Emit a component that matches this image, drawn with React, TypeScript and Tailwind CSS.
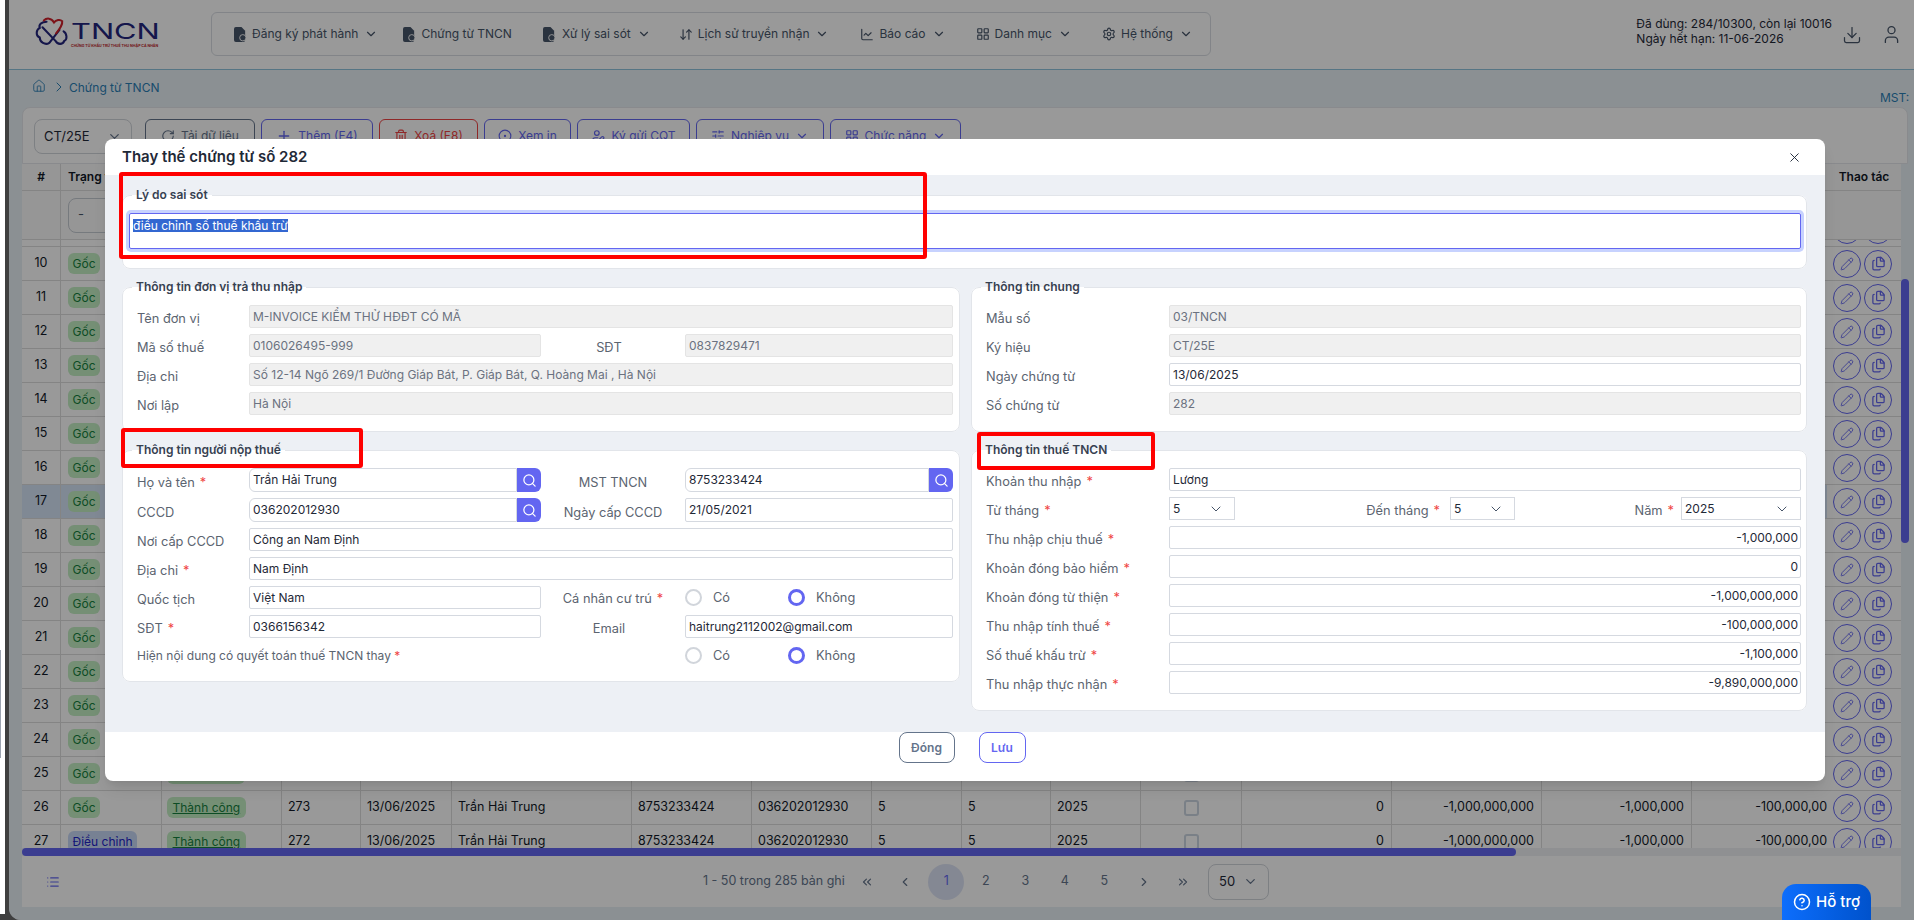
import {
  ChartLine,
  ChevronDown,
  ChevronLeft,
  ChevronRight,
  ChevronsLeft,
  ChevronsRight,
  CircleDot,
  CircleHelp,
  Download,
  Files,
  House,
  LayoutGrid,
  List,
  ArrowDownUp,
  Pencil,
  Plus,
  RotateCw,
  Search,
  Settings,
  SlidersHorizontal,
  Trash2,
  User,
  UserPen,
  X,
} from "lucide-react";
import type { ReactNode } from "react";

const cols =
  "grid grid-cols-[39px_101px_120px_79px_91px_180px_120px_120px_90px_89px_90px_101px_150px_150px_150px_135px_74px]";

function DocIcon() {
  return (
    <svg viewBox="0 0 14 16" className="h-[15px] w-[13px] shrink-0" fill="#475569">
      <path d="M2 0h6l4 4v10a2 2 0 0 1-2 2H2a2 2 0 0 1-2-2V2a2 2 0 0 1 2-2z" />
      <circle cx="9.5" cy="11.5" r="3.4" stroke="#fff" strokeWidth="1" />
    </svg>
  );
}

function NavItem({
  icon,
  label,
  caret = true,
  className = "",
}: {
  icon: ReactNode;
  label: string;
  caret?: boolean;
  className?: string;
}) {
  return (
    <div className={`flex items-center whitespace-nowrap text-[12px] text-[#475569] ${className}`}>
      <span className="mr-[5px] flex w-[14px] justify-center">{icon}</span>
      {label}
      {caret && <ChevronDown className="ml-[6px] h-[14px] w-[14px]" />}
    </div>
  );
}

function Logo() {
  return (
    <div className="flex w-[176px] shrink-0 items-center gap-[2px]">
      <svg viewBox="28 20 100 95" className="-mt-[5px] h-[33px] w-[34px] shrink-0" fill="none" strokeWidth="6" strokeLinecap="round">
        <path stroke="#23257d" d="M62 36C48 36 38 44 42 54C30 60 30 78 42 82C42 96 58 106 70 98L100 60" />
        <path stroke="#23257d" d="M50 52L88 92C94 104 110 104 114 92C124 88 122 70 112 64" />
        <path stroke="#d0202a" d="M54 32C62 24 76 24 84 38C90 30 102 28 108 34C110 46 100 58 90 70" />
      </svg>
      <div className="flex w-[88px] flex-col">
        <span className="origin-left scale-x-[1.4] text-[22px] leading-[22px] font-normal text-[#23257d]">TNCN</span>
        <span className="mt-[2px] whitespace-nowrap text-[3.6px] leading-[5px] font-bold text-[#c0272d]">
          CHỨNG TỪ KHẤU TRỪ THUẾ THU NHẬP CÁ NHÂN
        </span>
      </div>
    </div>
  );
}

function Header() {
  return (
    <header className="flex h-[70px] shrink-0 items-center border-b border-[#8fc3dc] bg-white pl-[26px]">
      <Logo />
      <nav className="-mt-px flex h-[44px] w-[1000px] items-center gap-[27px] rounded-md border border-[#d9dde3] bg-white px-[21px]">
        <NavItem icon={<DocIcon />} label="Đăng ký phát hành" />
        <NavItem icon={<DocIcon />} label="Chứng từ TNCN" caret={false} className="-ml-[3px]" />
        <NavItem icon={<DocIcon />} label="Xử lý sai sót" className="ml-[4px]" />
        <NavItem icon={<ArrowDownUp className="h-[15px] w-[15px]" />} label="Lịch sử truyền nhận" className="ml-px" />
        <NavItem icon={<ChartLine className="h-[15px] w-[15px]" />} label="Báo cáo" className="ml-[4px]" />
        <NavItem icon={<LayoutGrid className="h-[14px] w-[14px]" />} label="Danh mục" className="ml-[3px]" />
        <NavItem icon={<Settings className="h-[14px] w-[14px]" />} label="Hệ thống" className="ml-[3px]" />
      </nav>
      <div className="ml-auto flex items-center pr-[12px]">
        <div className="-mt-[7px] text-[12px] leading-[15px] text-[#1f2937]">
          <div>Đã dùng: 284/10300, còn lại 10016</div>
          <div>Ngày hết hạn: 11-06-2026</div>
        </div>
        <Download className="ml-[10px] h-[20px] w-[20px] text-[#475569]" strokeWidth={1.5} />
        <User className="ml-[19px] h-[21px] w-[21px] text-[#475569]" strokeWidth={1.5} />
      </div>
    </header>
  );
}

function ToolButton({
  icon,
  label,
  width,
  tone = "indigo",
  caret = false,
}: {
  icon: ReactNode;
  label: string;
  width: string;
  tone?: "indigo" | "slate" | "red";
  caret?: boolean;
}) {
  const toneClass =
    tone === "red"
      ? "border-[#ef4444] text-[#ef4444]"
      : tone === "slate"
        ? "border-[#64748b] text-[#64748b]"
        : "border-[#6366f1] text-[#6366f1]";
  return (
    <div className={`flex h-[34px] items-center justify-center gap-[6px] rounded-md border text-[12px] whitespace-nowrap ${width} ${toneClass}`}>
      {icon}
      {label}
      {caret && <ChevronDown className="h-[14px] w-[14px]" />}
    </div>
  );
}

function Toolbar() {
  return (
    <div className="flex h-[57px] shrink-0 items-start gap-[6px] rounded-t-lg border border-[#e5e7eb] bg-white pt-[11px] pl-[11px]">
      <div className="mr-[7px] flex h-[35px] w-[98px] items-center justify-between rounded-lg border border-[#d1d5db] px-[9px] text-[13px] text-[#1f2937]">
        CT/25E
        <ChevronDown className="h-[15px] w-[15px] text-[#64748b]" />
      </div>
      <ToolButton tone="slate" width="w-[110px]" icon={<RotateCw className="h-[14px] w-[14px]" />} label="Tải dữ liệu" />
      <ToolButton width="w-[112px]" icon={<Plus className="h-[16px] w-[16px]" />} label="Thêm (F4)" />
      <ToolButton tone="red" width="w-[99px]" icon={<Trash2 className="h-[14px] w-[14px]" />} label="Xoá (F8)" />
      <ToolButton width="w-[87px]" icon={<CircleDot className="h-[14px] w-[14px]" />} label="Xem in" />
      <ToolButton width="w-[113px]" icon={<UserPen className="h-[14px] w-[14px]" />} label="Ký gửi CQT" />
      <ToolButton width="w-[128px]" caret icon={<SlidersHorizontal className="h-[14px] w-[14px]" />} label="Nghiệp vụ" />
      <ToolButton width="w-[131px]" caret icon={<LayoutGrid className="h-[14px] w-[14px]" />} label="Chức năng" />
    </div>
  );
}

function Row({ no, selected }: { no: number; selected?: boolean }) {
  const adjusted = no === 27;
  // rows under the dialog only need what shows around it
  const full = no >= 26;
  const cell = "flex items-center border-r border-[#dcdcdc] overflow-hidden whitespace-nowrap";
  const money = "flex items-center justify-end border-r border-[#dcdcdc] pr-[7px] whitespace-nowrap";
  return (
    <div className={`${cols} h-[34px] border-b border-[#dcdcdc] text-[12.5px] text-[#111827] ${selected ? "bg-[#d6e4f7]" : "bg-white"}`}>
      <div className={`${cell} justify-center`}>{no > 9 && no}</div>
      <div className={`${cell} pl-[7px]`}>
        {no > 9 && (
          <span className={`flex h-[21px] items-center rounded-[6px] px-[4.5px] text-[12px] ${adjusted ? "bg-[#c7d7f5] text-[#1d23c9]" : "bg-[#c4eec4] text-[#15803d]"}`}>
            {adjusted ? "Điều chỉnh" : "Gốc"}
          </span>
        )}
      </div>
      <div className={`${cell} pl-[5px]`}>
        {full && (
          <span className="flex h-[21px] items-center rounded-[6px] bg-[#c4eec4] px-[5.5px] text-[12px] text-[#15803d] underline">Thành công</span>
        )}
        {no === 25 && <span className="h-[21px] w-[78px] rounded-[6px] bg-[#c4eec4]" />}
      </div>
      <div className={`${cell} pl-[6px]`}>{full && 299 - no}</div>
      <div className={`${cell} pl-[6px]`}>{full && "13/06/2025"}</div>
      <div className={`${cell} pl-[6px]`}>{full && "Trần Hải Trung"}</div>
      <div className={`${cell} pl-[6px]`}>{full && "8753233424"}</div>
      <div className={`${cell} pl-[6px]`}>{full && "036202012930"}</div>
      <div className={`${cell} pl-[6px]`}>{full && "5"}</div>
      <div className={`${cell} pl-[6px]`}>{full && "5"}</div>
      <div className={`${cell} pl-[6px]`}>{full && "2025"}</div>
      <div className={`${cell} justify-center`}>
        <span className="h-[16px] w-[15px] rounded-[3px] border-2 border-[#cbd5e1] bg-white" />
      </div>
      <div className={money}>{full && "0"}</div>
      <div className={money}>{full && "-1,000,000,000"}</div>
      <div className={money}>{full && "-1,000,000"}</div>
      <div className="flex items-center overflow-hidden whitespace-nowrap">
        {full && <span className="w-[143px] shrink-0 text-right">-100,000,000</span>}
      </div>
      <div className="flex items-center gap-[3px] bg-white pl-[6px] text-[#6366f1]">
        <span className="flex h-[28px] w-[28px] items-center justify-center rounded-full border border-[#6366f1]">
          <Pencil className="h-[14px] w-[14px]" strokeWidth={1.5} />
        </span>
        <span className="flex h-[28px] w-[28px] items-center justify-center rounded-full border border-[#6366f1]">
          <Files className="h-[15px] w-[15px]" strokeWidth={2} />
        </span>
      </div>
    </div>
  );
}

function DataTable() {
  const rows = Array.from({ length: 19 }, (_, i) => i + 9);
  return (
    <div className="flex shrink-0">
      <div className="w-[1879px] shrink-0">
        <div className={`${cols} h-[27px] border-b border-[#dcdcdc] bg-[#fafafa] text-[12px] font-semibold text-[#111827]`}>
          <div className="flex items-center justify-center border-r border-[#dcdcdc]">#</div>
          <div className="flex items-center pl-[7px]">Trạng thái</div>
          <div className="col-start-17 flex items-center justify-center">Thao tác</div>
        </div>
        <div className={`${cols} h-[49px] border-b border-[#dcdcdc] bg-[#fafafa]`}>
          <div className="border-r border-[#dcdcdc]" />
          <div className="flex items-center pl-[7px]">
            <span className="flex h-[35px] w-[84px] items-center rounded-lg border border-[#c5cbd3] pl-[9px] text-[13px] text-[#475569]">-</span>
          </div>
        </div>
        <div className="h-[608px] overflow-hidden">
          <div className="-mt-[27px]">
            {rows.map((no) => (
              <Row key={no} no={no} selected={no === 17} />
            ))}
          </div>
        </div>
        <div className="h-[8px] bg-[#eef1f4]">
          <div className="h-[8px] w-[1494px] rounded-full bg-[#6366f1]" />
        </div>
      </div>
      <div className="w-[8px] shrink-0">
        <div className="mt-[115px] h-[264px] rounded-full bg-[#6366f1]" />
      </div>
    </div>
  );
}

function Pagination() {
  const pages = ["2", "3", "4", "5"];
  const btn = "flex h-[36px] w-[39.5px] items-center justify-center";
  return (
    <div className="flex h-[51px] w-[1879px] shrink-0 items-center bg-white pl-[24px] text-[12.5px] text-[#64748b]">
      <List className="h-[14px] w-[14px] text-[#6366f1]" />
      <span className="ml-[643px] w-[139px] whitespace-nowrap">1 - 50 trong 285 bản ghi</span>
      <span className={`${btn} ml-[5px]`}><ChevronsLeft className="h-[14px] w-[14px]" /></span>
      <span className={`${btn} -ml-px`}><ChevronLeft className="h-[14px] w-[14px]" /></span>
      <span className={`${btn} ml-[1.5px]`}>
        <span className="flex h-[36px] w-[36px] items-center justify-center rounded-full bg-[#dde3f5] text-[#6366f1]">1</span>
      </span>
      {pages.map((p) => (
        <span key={p} className={btn}>{p}</span>
      ))}
      <span className={btn}><ChevronRight className="h-[14px] w-[14px]" /></span>
      <span className={btn}><ChevronsRight className="h-[14px] w-[14px]" /></span>
      <span className="ml-[5px] flex h-[36px] w-[61px] items-center justify-between rounded-lg border border-[#d1d5db] px-[10px] text-[13px] text-[#1f2937]">
        50
        <ChevronDown className="h-[15px] w-[15px] text-[#64748b]" />
      </span>
    </div>
  );
}

function Label({ children, req, className = "" }: { children: ReactNode; req?: boolean; className?: string }) {
  return (
    <span className={`shrink-0 pt-[5px] text-[12.8px] whitespace-nowrap text-[#5b6470] ${className}`}>
      {children}
      {req && <span className="ml-[5px] text-[#ef4444]">*</span>}
    </span>
  );
}

function Field({ value, disabled, right, className = "flex-1" }: { value: string; disabled?: boolean; right?: boolean; className?: string }) {
  return (
    <div
      className={`flex h-full min-w-0 items-center rounded-[2px] border px-[3px] text-[12px] whitespace-nowrap ${className} ${
        disabled ? "border-[#e4e4e4] bg-[#f0f0f0] text-[#6b7280]" : "border-[#d5d9e0] bg-white text-[#1f2937]"
      } ${right ? "justify-end pr-[2px]" : ""}`}
    >
      {value}
    </div>
  );
}

function SearchField({ value, className }: { value: string; className: string }) {
  return (
    <div className={`flex h-full ${className}`}>
      <div className="flex min-w-0 flex-1 items-center rounded-l-[6px] border border-[#d5d9e0] px-[3px] text-[12px] text-[#1f2937]">{value}</div>
      <div className="flex w-[24px] items-center justify-center rounded-r-[6px] bg-[#6366f1]">
        <Search className="h-[15px] w-[15px] text-white" strokeWidth={2} />
      </div>
    </div>
  );
}

function SelectBox({ value, className }: { value: string; className: string }) {
  return (
    <div className={`flex h-full items-center justify-between border border-[#d5d9e0] pr-[10px] pl-[3px] text-[12px] text-[#1f2937] ${className}`}>
      {value}
      <ChevronDown className="h-[16px] w-[16px] text-[#475569]" strokeWidth={1.5} />
    </div>
  );
}

function Radios() {
  return (
    <div className="flex items-center text-[12.8px] text-[#5b6470]">
      <span className="h-[17px] w-[17px] rounded-full border-2 border-[#d1d5db]" />
      <span className="ml-[11px] w-[75px]">Có</span>
      <span className="h-[17px] w-[17px] rounded-full border-[3px] border-[#6366f1]" />
      <span className="ml-[11px]">Không</span>
    </div>
  );
}

function Card({ title, className = "", children }: { title: string; className?: string; children: ReactNode }) {
  return (
    <fieldset className="rounded-lg border border-[#e2e5ea] bg-white">
      <legend className="ml-[9px] px-[4px] text-[12px] leading-[15px] font-semibold text-[#374151]">
        <span className="relative -top-px">{title}</span>
      </legend>
      <div className={`pt-[10px] ${className}`}>{children}</div>
    </fieldset>
  );
}

function InfoRow({ h = "h-[23px]", children }: { h?: string; children: ReactNode }) {
  return <div className={`flex items-center ${h}`}>{children}</div>;
}

function PayerCards() {
  return (
    <div className="flex flex-col gap-[11px]">
      <Card title="Thông tin đơn vị trả thu nhập" className="pr-[6px] pb-[16px] pl-[14px]">
        <div className="flex flex-col gap-[6px]">
          <InfoRow><Label className="w-[112px]">Tên đơn vị</Label><Field disabled value="M-INVOICE KIỂM THỬ HĐĐT CÓ MÃ" /></InfoRow>
          <InfoRow>
            <Label className="w-[112px]">Mã số thuế</Label>
            <Field disabled value="0106026495-999" className="w-[292px]" />
            <Label className="w-[144px] pr-[8px] text-center">SĐT</Label>
            <Field disabled value="0837829471" />
          </InfoRow>
          <InfoRow><Label className="w-[112px]">Địa chỉ</Label><Field disabled value="Số 12-14 Ngõ 269/1 Đường Giáp Bát, P. Giáp Bát, Q. Hoàng Mai , Hà Nội" /></InfoRow>
          <InfoRow><Label className="w-[112px]">Nơi lập</Label><Field disabled value="Hà Nội" /></InfoRow>
        </div>
      </Card>
      <Card title="Thông tin người nộp thuế" className="pr-[6px] pb-[14px] pl-[14px]">
        <div className="flex flex-col gap-[6px]">
          <InfoRow h="h-[24px]">
            <Label req className="w-[112px]">Họ và tên</Label>
            <SearchField value="Trần Hải Trung" className="w-[292px]" />
            <Label className="w-[144px] text-center">MST TNCN</Label>
            <SearchField value="8753233424" className="flex-1" />
          </InfoRow>
          <InfoRow h="h-[24px]">
            <Label className="w-[112px]">CCCD</Label>
            <SearchField value="036202012930" className="w-[292px]" />
            <Label className="w-[144px] text-center">Ngày cấp CCCD</Label>
            <Field value="21/05/2021" />
          </InfoRow>
          <InfoRow><Label className="w-[112px]">Nơi cấp CCCD</Label><Field value="Công an Nam Định" /></InfoRow>
          <InfoRow><Label req className="w-[112px]">Địa chỉ</Label><Field value="Nam Định" /></InfoRow>
          <InfoRow>
            <Label className="w-[112px]">Quốc tịch</Label>
            <Field value="Việt Nam" className="w-[292px]" />
            <Label req className="w-[144px] pt-0 pb-[2px] text-center">Cá nhân cư trú</Label>
            <Radios />
          </InfoRow>
          <InfoRow>
            <Label req className="w-[112px]">SĐT</Label>
            <Field value="0366156342" className="w-[292px]" />
            <Label className="w-[144px] pr-[8px] text-center">Email</Label>
            <Field value="haitrung2112002@gmail.com" />
          </InfoRow>
          <InfoRow>
            <span className="w-[548px] shrink-0 text-[12px] text-[#5b6470]">
              Hiện nội dung có quyết toán thuế TNCN thay <span className="text-[#ef4444]">*</span>
            </span>
            <Radios />
          </InfoRow>
        </div>
      </Card>
    </div>
  );
}

function TaxCards() {
  const money: [string, string][] = [
    ["Thu nhập chịu thuế", "-1,000,000"],
    ["Khoản đóng bảo hiểm", "0"],
    ["Khoản đóng từ thiện", "-1,000,000,000"],
    ["Thu nhập tính thuế", "-100,000,000"],
    ["Số thuế khấu trừ", "-1,100,000"],
    ["Thu nhập thực nhận", "-9,890,000,000"],
  ];
  return (
    <div className="flex flex-col gap-[11px]">
      <Card title="Thông tin chung" className="pr-[5px] pb-[16px] pl-[14px]">
        <div className="flex flex-col gap-[6px]">
          <InfoRow><Label className="w-[183px]">Mẫu số</Label><Field disabled value="03/TNCN" /></InfoRow>
          <InfoRow><Label className="w-[183px]">Ký hiệu</Label><Field disabled value="CT/25E" /></InfoRow>
          <InfoRow><Label className="w-[183px]">Ngày chứng từ</Label><Field value="13/06/2025" /></InfoRow>
          <InfoRow><Label className="w-[183px]">Số chứng từ</Label><Field disabled value="282" /></InfoRow>
        </div>
      </Card>
      <Card title="Thông tin thuế TNCN" className="pr-[5px] pb-[16px] pl-[14px]">
        <div className="flex flex-col gap-[6px]">
          <InfoRow><Label req className="w-[183px]">Khoản thu nhập</Label><Field value="Lương" /></InfoRow>
          <InfoRow>
            <Label req className="w-[183px]">Từ tháng</Label>
            <SelectBox value="5" className="w-[66px]" />
            <Label req className="w-[205px] text-right">Đến tháng</Label>
            <SelectBox value="5" className="ml-[10px] w-[65px]" />
            <Label req className="w-[159px] text-right">Năm</Label>
            <SelectBox value="2025" className="ml-[7px] flex-1" />
          </InfoRow>
          {money.map(([label, value]) => (
            <InfoRow key={label}>
              <Label req className="w-[183px]">{label}</Label>
              <Field right value={value} />
            </InfoRow>
          ))}
        </div>
      </Card>
    </div>
  );
}

function Annotation({ className }: { className: string }) {
  return <div className={`pointer-events-none absolute rounded-[3px] border-4 border-[#ff0000] ${className}`} />;
}

function ReplaceModal() {
  return (
    <div className="absolute top-[139px] left-[96px] flex h-[642px] w-[1720px] flex-col overflow-hidden rounded-lg bg-white shadow-lg">
      <div className="flex h-[36px] shrink-0 items-center justify-between pr-[23px] pl-[17px]">
        <h2 className="text-[15px] font-semibold text-[#1f2937]">Thay thế chứng từ số 282</h2>
        <X className="h-[15px] w-[15px] text-[#1f2937]" strokeWidth={1.5} />
      </div>
      <div className="flex flex-1 flex-col gap-[11px] bg-[#edf0f5] pt-[13px] pr-[18px] pl-[17px]">
        <Card title="Lý do sai sót" className="pr-[5px] pb-[19px] pl-[6px]">
          <div className="h-[36px] rounded-[2px] border border-[#6366f1] px-[3px] pt-[5px] ring-[3px] ring-[#c7d2fe]">
            <span className="block w-fit bg-[#3367d1] text-[12px] leading-[13px] text-white">điều chỉnh số thuế khấu trừ</span>
          </div>
        </Card>
        <div className="grid grid-cols-[838px_836px] gap-x-[11px]">
          <PayerCards />
          <TaxCards />
        </div>
      </div>
      <div className="flex h-[49px] shrink-0 justify-center gap-[24px] pr-[6px] text-[12px] font-semibold">
        <button className="h-[31px] w-[56px] rounded-lg border border-[#64748b] text-[#64748b]">Đóng</button>
        <button className="h-[31px] w-[47px] rounded-lg border border-[#6366f1] text-[#6366f1]">Lưu</button>
      </div>
      <Annotation className="top-[33px] left-[14px] h-[87px] w-[808px]" />
      <Annotation className="top-[289px] left-[16px] h-[40px] w-[242px]" />
      <Annotation className="top-[293px] left-[872px] h-[38px] w-[178px]" />
    </div>
  );
}

export default function App() {
  return (
    <div className="flex h-[920px] w-[1914px] overflow-hidden bg-[#3f3f3f] font-[family-name:Inter,sans-serif]">
      <div className="h-[914px] w-[5px] shrink-0 bg-white">
        <div className="mt-[650px] h-[108px] w-px bg-[#9ca3af]" />
      </div>
      <main className="relative ml-[4px] flex h-[920px] min-w-0 flex-1 flex-col rounded-bl-[12px] bg-[#e8f0f5]">
        <Header />
        <div className="flex h-[37px] shrink-0 items-start pt-[9px] pr-[6px] pl-[23px] text-[12px] text-[#2b7fb5]">
          <House className="h-[14px] w-[14px]" strokeWidth={1.5} />
          <ChevronRight className="ml-[5px] h-[16px] w-[16px]" strokeWidth={1.5} />
          <span className="ml-[2px]">Chứng từ TNCN</span>
          <span className="mt-[10px] ml-auto -mr-[6px] w-[34px] overflow-hidden whitespace-nowrap">MST:</span>
        </div>
        <div className="flex flex-col pr-[6px] pl-[13px]">
          <Toolbar />
          <DataTable />
          <Pagination />
        </div>
        <div className="absolute inset-0 rounded-bl-[12px] bg-black/40" />
        <ReplaceModal />
        <div className="absolute top-[884px] left-[1773px] flex h-[36px] w-[89px] items-center justify-center gap-[5px] rounded-t-[14px] bg-gradient-to-r from-[#0d6efd] to-[#0052cc] text-[15px] font-medium text-white">
          <CircleHelp className="h-[18px] w-[18px]" />
          Hỗ trợ
        </div>
      </main>
    </div>
  );
}
